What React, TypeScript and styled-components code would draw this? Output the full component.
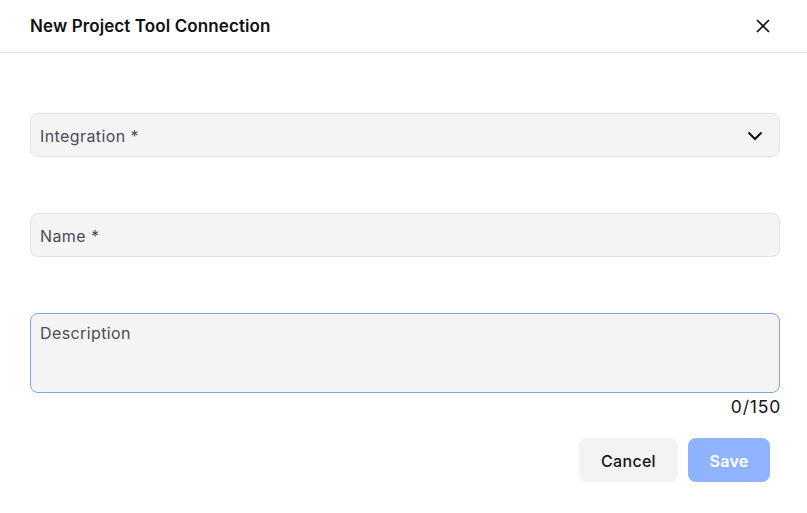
import React from "react";
import styled, { createGlobalStyle } from "styled-components";

const Global = createGlobalStyle`
  html, body { margin: 0; padding: 0; background: #ffffff; }
  body { font-family: Inter, "Noto Sans", sans-serif; }
  * { box-sizing: border-box; }
`;

const Dialog = styled.div`
  width: 807px;
  height: 513px;
  background: #fff;
  border-radius: 12px;
  display: flex;
  flex-direction: column;
  overflow: hidden;
`;

const Header = styled.div`
  height: 53px;
  display: flex;
  align-items: center;
  justify-content: space-between;
  padding: 0 37px 0 30px;
  border-bottom: 1px solid #e4e4e4;
`;

const Title = styled.h2`
  margin: 0;
  font-size: 17px;
  font-weight: 600;
  color: #111111;
  letter-spacing: 0.1px;
  padding-bottom: 1px;
`;

const CloseButton = styled.button`
  border: none;
  background: none;
  padding: 0;
  width: 14px;
  height: 14px;
  display: flex;
  align-items: center;
  justify-content: center;
  cursor: pointer;
`;

const Body = styled.div`
  padding: 60px 27px 0 30px;
  display: flex;
  flex-direction: column;
`;

const Field = styled.div<{ $h: number; $focused?: boolean; $mb?: number }>`
  height: ${(p) => p.$h}px;
  margin-bottom: ${(p) => p.$mb ?? 0}px;
  background: #f4f4f4;
  border: 1px solid ${(p) => (p.$focused ? "#7aa4f8" : "#e2e2e2")};
  border-radius: 8px;
  display: flex;
  align-items: ${(p) => (p.$focused ? "flex-start" : "center")};
  justify-content: space-between;
  padding: ${(p) => (p.$focused ? "9px 9px 0 9px" : "1px 16px 0 9px")};
`;

const Label = styled.span`
  font-size: 16px;
  letter-spacing: 0.4px;
  color: #4b4b58;
`;

const Counter = styled.div`
  align-self: flex-end;
  font-size: 17.5px;
  letter-spacing: 0.8px;
  color: #151515;
  margin-top: 4px;
  margin-right: -1px;
  line-height: 20px;
`;

const Actions = styled.div`
  display: flex;
  justify-content: flex-end;
  gap: 10px;
  margin-top: 21px;
  padding-right: 10px;
`;

const Button = styled.button<{ $primary?: boolean }>`
  height: 44px;
  border: none;
  border-radius: 8px;
  font-family: Inter, "Noto Sans", sans-serif;
  font-size: 16px;
  letter-spacing: 0.3px;
  padding-top: 2px;
  font-weight: ${(p) => (p.$primary ? 600 : 500)};
  background: ${(p) => (p.$primary ? "#8fb3fe" : "#f3f3f3")};
  color: ${(p) => (p.$primary ? "#ffffff" : "#151515")};
  padding-left: 21px;
  padding-right: 21px;
  min-width: ${(p) => (p.$primary ? 82 : 99)}px;
  cursor: pointer;
`;

export default function App() {
  return (
    <>
      <Global />
      <Dialog>
        <Header>
          <Title>New Project Tool Connection</Title>
          <CloseButton aria-label="Close">
            <svg width="14" height="14" viewBox="0 0 14 14" fill="none">
              <path d="M1 1L13 13M13 1L1 13" stroke="#111" strokeWidth="1.7" />
            </svg>
          </CloseButton>
        </Header>
        <Body>
          <Field $h={44} $mb={56}>
            <Label>Integration *</Label>
            <svg width="16" height="10" viewBox="0 0 16 10" fill="none">
              <path d="M1.5 1.5L8 8L14.5 1.5" stroke="#111" strokeWidth="2" />
            </svg>
          </Field>
          <Field $h={44} $mb={56}>
            <Label>Name *</Label>
          </Field>
          <Field $h={80} $focused>
            <Label>Description</Label>
          </Field>
          <Counter>0/150</Counter>
          <Actions>
            <Button>Cancel</Button>
            <Button $primary>Save</Button>
          </Actions>
        </Body>
      </Dialog>
    </>
  );
}
